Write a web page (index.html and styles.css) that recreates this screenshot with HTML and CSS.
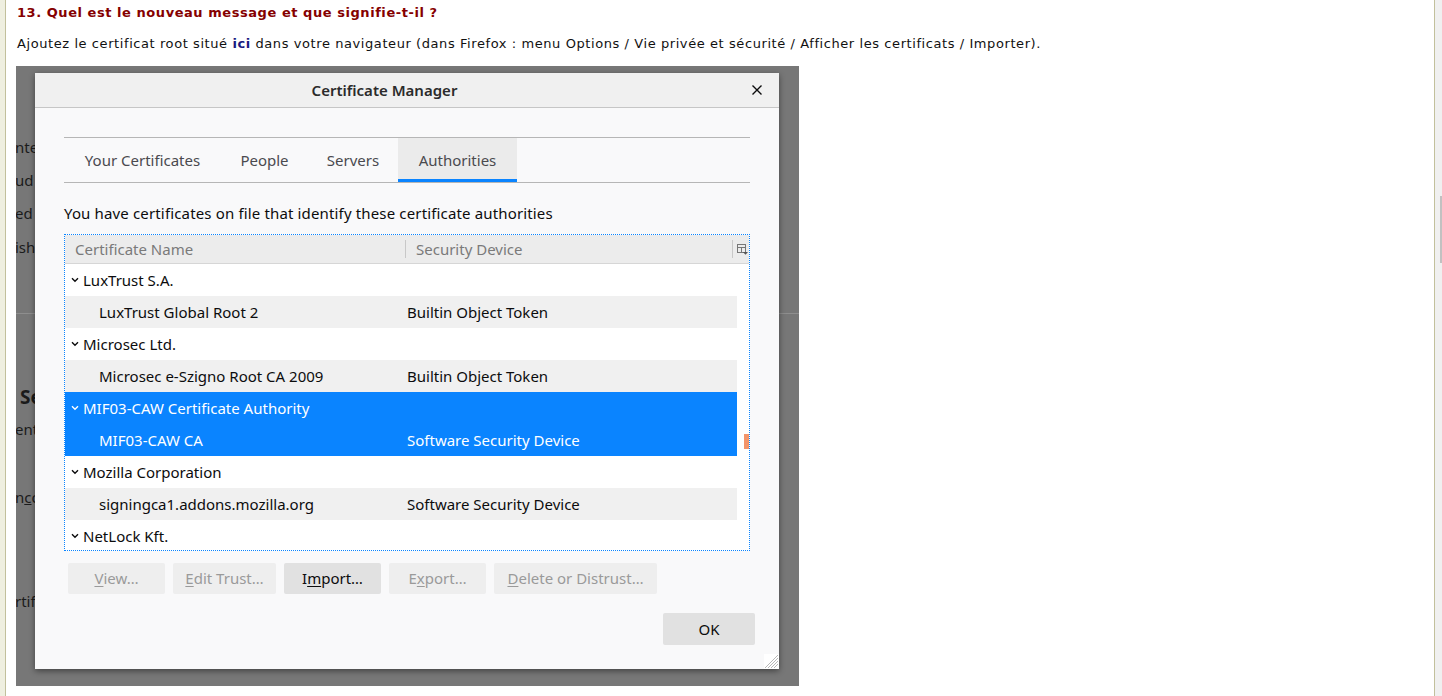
FILE: index.html
```html
<!DOCTYPE html>
<html lang="fr">
<head>
<meta charset="utf-8">
<title>Certificats</title>
<link rel="stylesheet" href="styles.css">
</head>
<body>
<div class="gutter"></div>
<main class="page">
  <h3 class="q">13. Quel est le nouveau message et que signifie-t-il ?</h3>
  <p class="txt">Ajoutez le certificat root situé <a class="lnk">ici</a> dans votre navigateur (dans Firefox : menu Options / Vie privée et sécurité / Afficher les certificats / Importer).</p>
  <div class="shot">
    <div class="behind">
      <div class="bl b1">nte</div>
      <div class="bl b2">ud</div>
      <div class="bl b3">ed</div>
      <div class="bl b4">ish</div>
      <div class="bhr"></div>
      <div class="bl bh">Se</div>
      <div class="bl b5">ent</div>
      <div class="bl b6">n<u>c</u>o</div>
      <div class="bl b7">rtif</div>
    </div>
    <div class="dialog">
      <div class="titlebar">
        <div class="title">Certificate Manager</div>
        <div class="close"><svg width="12" height="12" viewBox="0 0 12 12"><path d="M1.5 1.5 L10.5 10.5 M10.5 1.5 L1.5 10.5" stroke="#0c0c0d" stroke-width="1.4" fill="none"/></svg></div>
      </div>
      <div class="dbody">
        <div class="tabs">
          <div class="tab t1">Your Certificates</div>
          <div class="tab t2">People</div>
          <div class="tab t3">Servers</div>
          <div class="tab t4 sel">Authorities</div>
        </div>
        <div class="desc">You have certificates on file that identify these certificate authorities</div>
        <div class="tree">
          <div class="thead">
            <div class="hc h1">Certificate Name</div>
            <div class="hc h2">Security Device</div>
            <div class="hc h3"><svg width="11" height="11" viewBox="0 0 11 11"><rect x="0.5" y="0.5" width="8" height="8" fill="none" stroke="#777" stroke-width="1"/><path d="M0.5 3.5 H8.5 M4.5 3.5 V8.5" stroke="#777" stroke-width="1"/><path d="M6 8 H11 L8.5 10.8 Z" fill="#555"/></svg></div>
          </div>
          <div class="tbody">
            <div class="rows">
              <div class="row grp"><svg class="chev" width="8" height="6" viewBox="0 0 8 6"><path d="M1 1.2 L4 4.2 L7 1.2" stroke="#0c0c0d" stroke-width="1.4" fill="none"/></svg><span>LuxTrust S.A.</span></div>
              <div class="row child alt"><span class="c1">LuxTrust Global Root 2</span><span class="c2">Builtin Object Token</span></div>
              <div class="row grp"><svg class="chev" width="8" height="6" viewBox="0 0 8 6"><path d="M1 1.2 L4 4.2 L7 1.2" stroke="#0c0c0d" stroke-width="1.4" fill="none"/></svg><span>Microsec Ltd.</span></div>
              <div class="row child alt"><span class="c1">Microsec e-Szigno Root CA 2009</span><span class="c2">Builtin Object Token</span></div>
              <div class="row grp selr"><svg class="chev" width="8" height="6" viewBox="0 0 8 6"><path d="M1 1.2 L4 4.2 L7 1.2" stroke="#ffffff" stroke-width="1.4" fill="none"/></svg><span>MIF03-CAW Certificate Authority</span></div>
              <div class="row child selr"><span class="c1">MIF03-CAW CA</span><span class="c2">Software Security Device</span></div>
              <div class="row grp"><svg class="chev" width="8" height="6" viewBox="0 0 8 6"><path d="M1 1.2 L4 4.2 L7 1.2" stroke="#0c0c0d" stroke-width="1.4" fill="none"/></svg><span>Mozilla Corporation</span></div>
              <div class="row child alt"><span class="c1">signingca1.addons.mozilla.org</span><span class="c2">Software Security Device</span></div>
              <div class="row grp"><svg class="chev" width="8" height="6" viewBox="0 0 8 6"><path d="M1 1.2 L4 4.2 L7 1.2" stroke="#0c0c0d" stroke-width="1.4" fill="none"/></svg><span>NetLock Kft.</span></div>
            </div>
            <div class="sbar"><div class="sthumb"></div></div>
          </div>
        </div>
        <div class="btns">
          <div class="btn dis w97"><u>V</u>iew…</div>
          <div class="btn dis w103"><u>E</u>dit Trust…</div>
          <div class="btn act w97">I<u>m</u>port…</div>
          <div class="btn dis w97">E<u>x</u>port…</div>
          <div class="btn dis w163"><u>D</u>elete or Distrust…</div>
        </div>
        <div class="okrow"><div class="btn ok">OK</div></div>
      </div>
      <svg class="grip" width="15" height="15" viewBox="0 0 15 15"><rect width="15" height="15" fill="#ffffff"/><path d="M14 4 L4 14 M14 7 L7 14 M14 10 L10 14 M14 1 L1 14" stroke="#b8b8b8" stroke-width="1"/></svg>
    </div>
  </div>
</main>
<div class="vscroll"><div class="vthumb"></div></div>
</body>
</html>
```

FILE: styles.css
```css
html, body {
  margin: 0;
  padding: 0;
  height: 696px;
  overflow: hidden;
}
body {
  display: flex;
  background: #efefe0;
  font-family: "DejaVu Sans", sans-serif;
}
.gutter {
  width: 5px;
  flex: none;
}
.page {
  flex: 1;
  background: #ffffff;
  border-left: 1px solid #c2c09c;
  border-right: 1px solid #c2c09c;
  padding: 4px 0 0 10px;
  min-width: 0;
}
.vscroll {
  width: 7px;
  flex: none;
  background: #f0f0f0;
  padding-top: 196px;
  box-sizing: border-box;
}
.vthumb {
  width: 2px;
  height: 67px;
  margin-left: 5px;
  background: #c1c1c1;
}
.q {
  margin: 0;
  font-size: 13px;
  line-height: 18px;
  font-weight: bold;
  color: #850000;
  padding-left: 1px;
  letter-spacing: 0.55px;
}
.txt {
  margin: 13px 0 13px 0;
  font-size: 13px;
  line-height: 18px;
  color: #111111;
  padding-left: 1px;
  white-space: nowrap;
  letter-spacing: 0.58px;
}
.lnk {
  font-weight: bold;
  color: #1a1a80;
}
.shot {
  position: relative;
  width: 783px;
  height: 620px;
  background: #777777;
  overflow: hidden;
  font-family: "Noto Sans", "Open Sans", sans-serif;
}
.behind {
  display: flex;
  flex-direction: column;
  padding-top: 71px;
  color: #1b1b1b;
  font-size: 15px;
}
.bl {
  line-height: 20px;
  height: 20px;
  white-space: nowrap;
  margin-left: -1px;
}
.b2, .b3 { margin-top: 13px; }
.b4 { margin-top: 14px; }
.bhr {
  margin-top: 56px;
  height: 1px;
  background: #8e8e8e;
}
.bh {
  margin-top: 71px;
  font-weight: bold;
  font-size: 19px;
  line-height: 24px;
  height: 24px;
  margin-left: 4px;
}
.b5 { margin-top: 10px; }
.b6 { margin-top: 48px; }
.b7 { margin-top: 84px; }

.dialog {
  position: absolute;
  left: 19px;
  top: 7px;
  width: 744px;
  height: 596px;
  background: #f9f9fa;
  box-shadow: 0 2px 6px rgba(0,0,0,0.45);
  display: flex;
  flex-direction: column;
  color: #0c0c0d;
}
.titlebar {
  height: 34px;
  flex: none;
  display: flex;
  align-items: center;
  background: #f0f0f0;
  border-bottom: 1px solid #c6c6c6;
}
.title {
  flex: 1;
  text-align: center;
  font-weight: 600;
  font-size: 15px;
  color: #2b2b2b;
  padding-bottom: 1px;
}
.close {
  width: 45px;
  display: flex;
  justify-content: center;
  align-items: center;
}
.dbody {
  padding: 29px 29px 0 29px;
  flex: 1;
  display: flex;
  flex-direction: column;
}
.tabs {
  display: flex;
  border-top: 1px solid #b6b6b6;
  border-bottom: 1px solid #b6b6b6;
  height: 44px;
}
.tab {
  display: flex;
  align-items: center;
  justify-content: center;
  font-size: 15px;
  color: #4a4a4f;
  box-sizing: border-box;
  height: 44px;
}
.t1 { width: 157px; }
.t2 { width: 87px; }
.t3 { width: 90px; }
.t4 { width: 119px; }
.tab.sel {
  background: #ebebeb;
  border-bottom: 3px solid #0a84ff;
  padding-top: 3px;
}
.desc {
  margin-top: 20px;
  font-size: 15px;
  line-height: 20px;
  height: 20px;
  letter-spacing: 0.15px;
}
.tree {
  margin-top: 11px;
  width: 686px;
  height: 317px;
  box-sizing: border-box;
  border: 1px dotted #0a84ff;
  background: #ffffff;
  display: flex;
  flex-direction: column;
  overflow: hidden;
  font-size: 15px;
}
.thead {
  height: 28px;
  flex: none;
  display: flex;
  align-items: center;
  background: #ececec;
  border-bottom: 1px solid #d6d6d6;
  color: #7a7a7a;
}
.hc {
  height: 18px;
  line-height: 18px;
  box-sizing: border-box;
}
.h1 {
  width: 341px;
  padding-left: 10px;
  border-right: 1px solid #c8c8c8;
}
.h2 {
  width: 327px;
  padding-left: 10px;
  border-right: 1px solid #c8c8c8;
}
.h3 {
  flex: 1;
  display: flex;
  align-items: center;
  padding-left: 4px;
}
.tbody {
  flex: 1;
  display: flex;
  min-height: 0;
}
.rows {
  width: 672px;
  display: flex;
  flex-direction: column;
}
.row {
  height: 32px;
  flex: none;
  display: flex;
  align-items: center;
  white-space: nowrap;
}
.row.alt { background: #f0f0f0; }
.row.selr { background: #0a84ff; color: #ffffff; }
.grp { padding-left: 6px; }
.chev { margin-right: 4px; flex: none; }
.child { padding-left: 34px; }
.c1 { width: 308px; flex: none; }
.sbar {
  width: 12px;
  padding-top: 170px;
  box-sizing: border-box;
}
.sthumb {
  width: 5px;
  height: 15px;
  margin-left: 7px;
  background: #f4956a;
}
.btns {
  margin-top: 12px;
  display: flex;
  gap: 8px;
  padding-left: 4px;
}
.btn {
  height: 31px;
  border-radius: 2px;
  display: flex;
  align-items: center;
  justify-content: center;
  font-size: 15px;
  box-sizing: border-box;
  white-space: nowrap;
  padding-bottom: 1px;
}
.btn u { text-decoration-thickness: 1px; text-underline-offset: 2px; }
.dis { background: #eeeeee; color: #9a9a9a; }
.act { background: #e1e1e1; color: #0c0c0d; }
.w97 { width: 97px; }
.w103 { width: 103px; }
.w163 { width: 163px; }
.okrow {
  margin-top: 19px;
  display: flex;
  justify-content: flex-end;
  margin-right: -5px;
}
.ok {
  width: 92px;
  height: 32px;
  background: #e1e1e1;
  color: #0c0c0d;
  padding-bottom: 0;
}
.grip {
  position: absolute;
  right: 0;
  bottom: 0;
}
```
